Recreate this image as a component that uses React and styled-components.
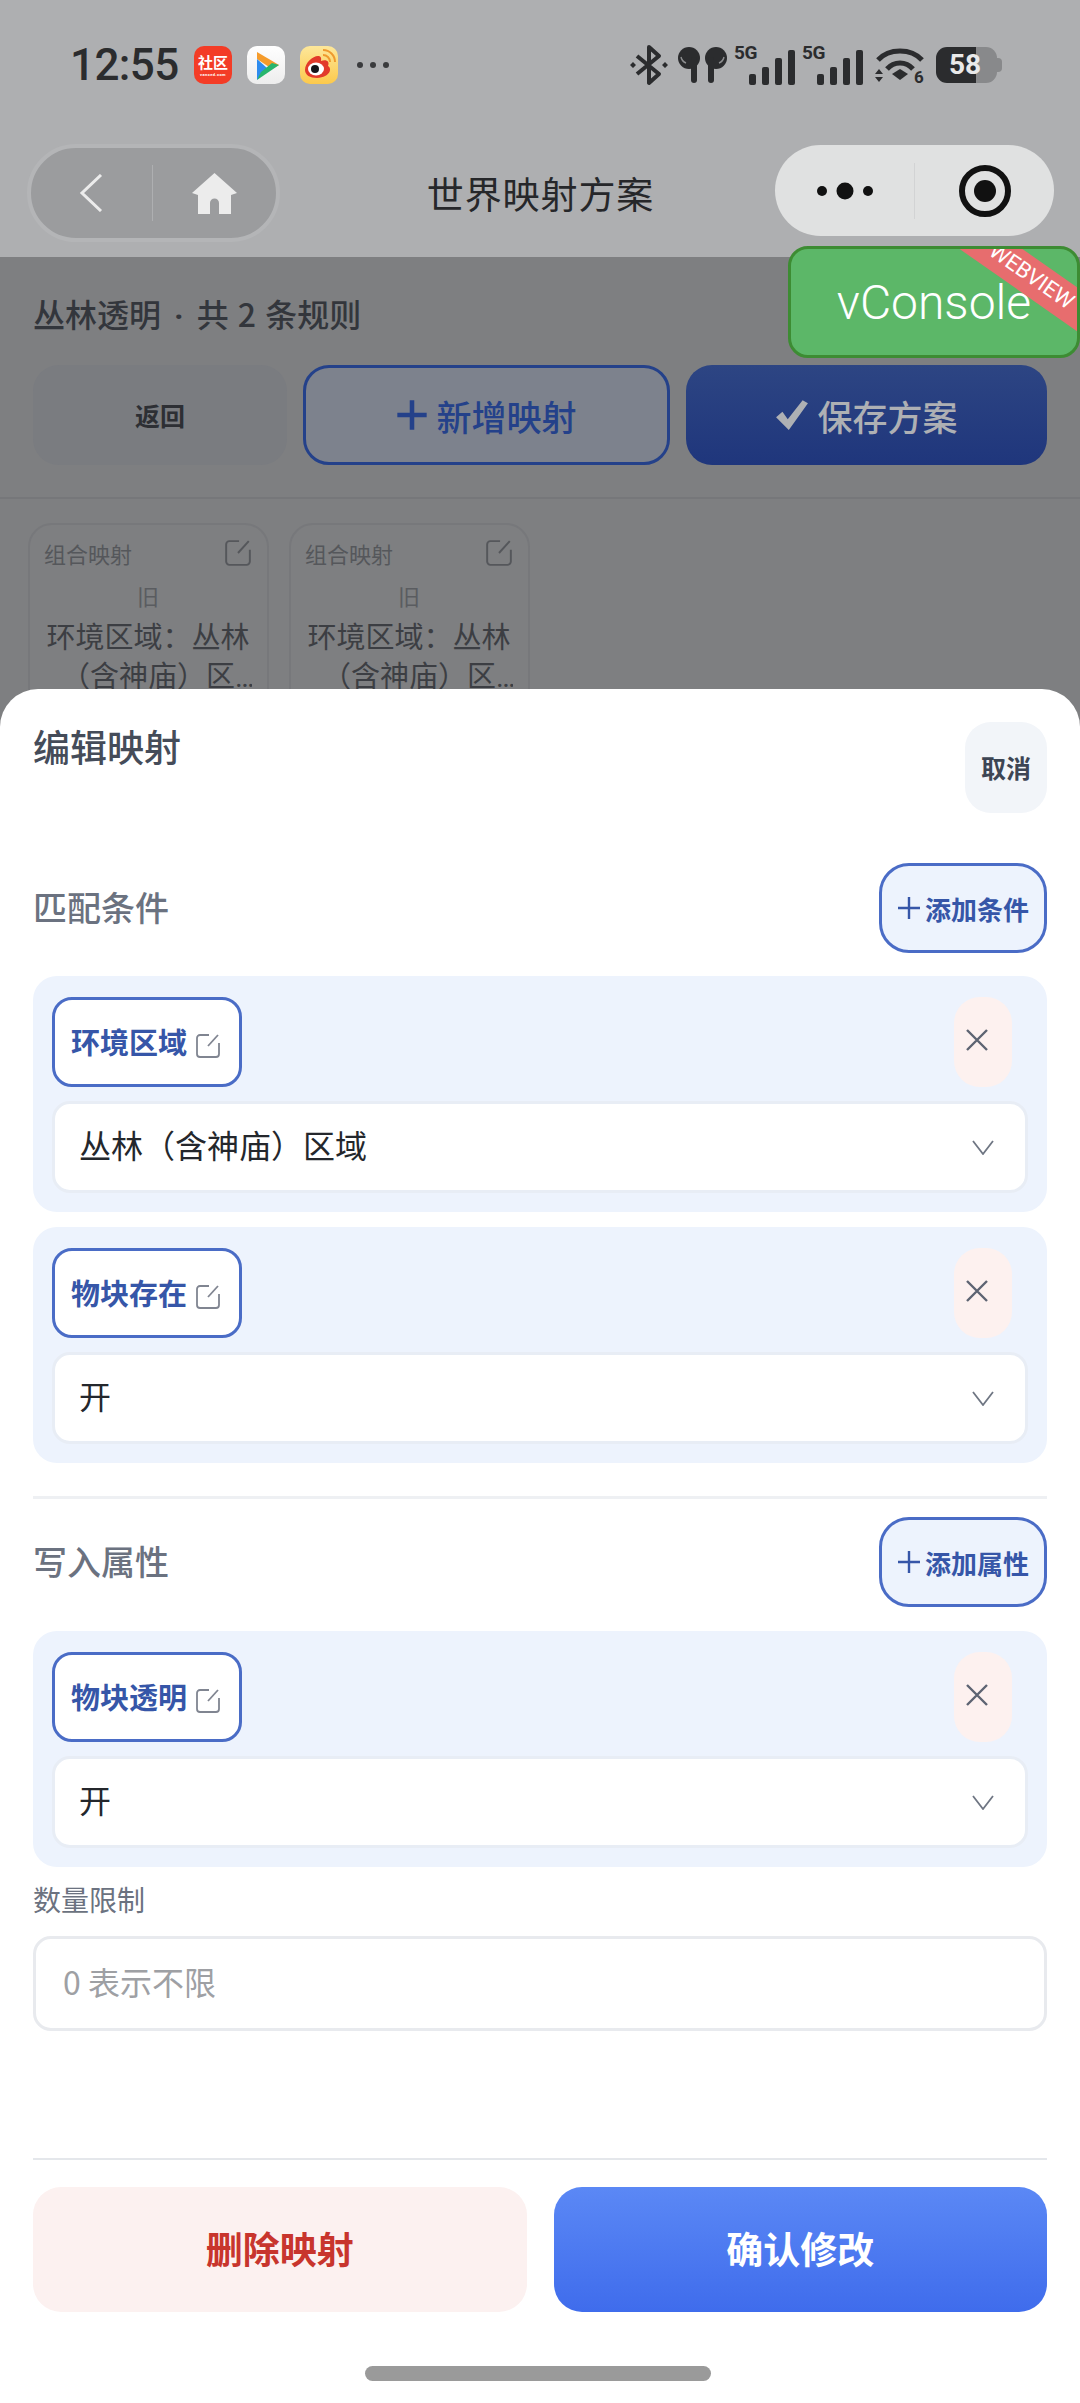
import React from 'react';
import styled, { createGlobalStyle } from 'styled-components';

const GlobalStyle = createGlobalStyle`
  html, body {
    margin: 0;
    padding: 0;
    background: #fff;
  }

  * {
    box-sizing: border-box;
  }
`;

const Page = styled.div`
  position: relative;
  width: 1080px;
  height: 2403px;
  overflow: hidden;
  background: #7e7f81;
  font-family: "Noto Sans CJK SC", "Noto Sans", sans-serif;
`;

const TopArea = styled.div`
  height: 257px;
  background: #aeafb1;
`;

const StatusBar = styled.div`
  display: flex;
  justify-content: space-between;
  align-items: center;
  height: 145px;
  padding: 43px 77px 58px 70px;
  color: #2b2c2e;
`;

const StatusGroup = styled.div`
  display: flex;
  align-items: center;
  gap: ${(props) => props.$gap || 0}px;
`;

const Time = styled.div`
  width: 124px;
  font-family: Roboto, sans-serif;
  font-size: 44px;
  font-weight: 500;
  letter-spacing: -0.6px;
  line-height: 44px;
`;

const AppIcon = styled.div`
  display: flex;
  flex-direction: column;
  align-items: center;
  justify-content: center;
  width: 38px;
  height: 38px;
  margin-right: 15px;
  border-radius: 10px;
  overflow: hidden;
  background: ${(props) => props.$bg};
  color: #fff;
  font-size: 15px;
  font-weight: 700;
  line-height: 17px;
`;

const AppTiny = styled.span`
  margin-top: 2px;
  font-family: Roboto, sans-serif;
  font-size: 4px;
  line-height: 5px;
  letter-spacing: 0.4px;
`;

const MoreDots = styled.div`
  display: flex;
  gap: 7px;
  margin-left: 4px;
`;

const Dot = styled.i`
  width: 6px;
  height: 6px;
  border-radius: 50%;
  background: #3a3b3d;
`;

const BluetoothIcon = styled.svg`
  margin-right: 3px;
`;

const WifiIcon = styled.svg`
  margin: 0 4px 0 5px;
`;

const Signal = styled.div`
  position: relative;
  display: flex;
  align-items: flex-end;
  justify-content: flex-end;
  gap: 6px;
  width: 61px;
  height: 40px;
`;

const SignalBadge = styled.span`
  position: absolute;
  top: -2px;
  left: 0;
  font-family: Roboto, sans-serif;
  font-size: 19px;
  font-weight: 700;
  line-height: 19px;
  letter-spacing: -0.5px;
`;

const SignalBar = styled.i`
  width: 7px;
  height: ${(props) => props.$h}px;
  border-radius: 2px;
  background: #2b2c2e;
`;

const Battery = styled.div`
  position: relative;
  display: flex;
  align-items: center;
  justify-content: center;
  width: 61px;
  height: 36px;
  margin-right: 6px;
  padding-right: 3px;
  border-radius: 11px;
  background: linear-gradient(90deg, #2b2c2e 0 40px, #88898b 40px);
  color: #e9e9e9;
  font-family: Roboto, sans-serif;
  font-size: 28px;
  font-weight: 700;
  line-height: 36px;

  &::after {
    content: "";
    position: absolute;
    top: 11px;
    right: -5px;
    width: 5px;
    height: 14px;
    border-radius: 0 4px 4px 0;
    background: #88898b;
  }
`;

const NavBar = styled.div`
  display: grid;
  grid-template-columns: 1fr auto 1fr;
  align-items: flex-start;
  height: 112px;
  padding: 0 26px 0 27px;
`;

const NavTitle = styled.div`
  padding-top: 21px;
  color: #26272a;
  font-size: 37px;
  line-height: 54px;
  letter-spacing: 0.9px;
`;

const BackCapsule = styled.div`
  display: flex;
  align-items: center;
  width: 253px;
  height: 98px;
  margin-top: -1px;
  border: 4px solid #b4b5b7;
  border-radius: 49px;
  background: #9b9c9e;
`;

const MenuCapsule = styled.div`
  display: flex;
  align-items: center;
  justify-self: end;
  width: 279px;
  height: 91px;
  border-radius: 46px;
  background: #e0e1e1;
`;

const CapsuleCell = styled.div`
  display: flex;
  align-items: center;
  justify-content: center;
  flex: ${(props) => props.$flex || 1};
`;

const CapsuleLine = styled.i`
  width: 1px;
  height: 56px;
  background: ${(props) => props.$color};
`;

const Behind = styled.div`
  height: 432px;
`;

const PlanTitle = styled.div`
  height: 78px;
  padding: 34px 33px 0;
  color: #33363c;
  font-size: 32px;
  font-weight: 500;
  line-height: 44px;
  word-spacing: 2px;
`;

const TitleDot = styled.span`
  margin: 0 13px;
  font-family: Roboto, sans-serif;
  font-weight: 700;
`;

const PlanActions = styled.div`
  display: flex;
  gap: 16px;
  height: 134px;
  margin-top: 30px;
  padding: 0 33px 32px;
  border-bottom: 2px solid #76777a;
`;

const PlanButton = styled.div`
  display: flex;
  align-items: center;
  justify-content: center;
  gap: 8px;
  flex: ${(props) => (props.$narrow ? '0 0 254px' : '1')};
  border-radius: 26px;
  border: ${(props) => (props.$variant === 'outline' ? '3px solid #24418a' : 'none')};
  background: ${(props) => {
    if (props.$variant === 'outline') return '#7d828d';
    if (props.$variant === 'solid') return 'linear-gradient(180deg, #2d4583, #1f367c)';
    return '#7a7c80';
  }};
  color: ${(props) => {
    if (props.$variant === 'outline') return '#24418a';
    if (props.$variant === 'solid') return '#aeb0b4';
    return '#2d2f34';
  }};
  font-size: ${(props) => (props.$narrow ? 25 : 35)}px;
  font-weight: ${(props) => (props.$narrow ? 700 : 500)};
`;

const CardRow = styled.div`
  display: flex;
  gap: 20px;
  padding: 24px 0 0 28px;
`;

const Card = styled.div`
  width: 241px;
  height: 240px;
  padding: 12px 15px 0 14px;
  border: 2px solid #77787b;
  border-radius: 24px;
`;

const CardHead = styled.div`
  display: flex;
  justify-content: space-between;
  align-items: center;
  color: #55575b;
  font-size: 22px;
  line-height: 32px;
`;

const CardOld = styled.div`
  margin-top: 11px;
  color: #5a5c60;
  font-size: 22px;
  line-height: 30px;
  text-align: center;
`;

const CardText = styled.div`
  display: -webkit-box;
  margin-top: 9px;
  overflow: hidden;
  color: #3c3e43;
  font-family: Roboto, "Noto Sans CJK SC", sans-serif;
  font-size: 29px;
  line-height: 39px;
  text-align: center;
  -webkit-box-orient: vertical;
  -webkit-line-clamp: 2;
`;

const VConsole = styled.div`
  position: absolute;
  top: 246px;
  left: 788px;
  display: flex;
  align-items: center;
  justify-content: center;
  width: 292px;
  height: 112px;
  overflow: hidden;
  border: 3px solid #3d8c33;
  border-radius: 20px;
  background: #5cb768;
  color: #fff;
  font-family: Roboto, sans-serif;
  font-size: 48px;
  font-weight: 300;
`;

const Ribbon = styled.div`
  position: absolute;
  top: 10px;
  right: -54px;
  width: 200px;
  height: 36px;
  background: #e76d6e;
  color: #fff;
  font-size: 22px;
  font-weight: 400;
  line-height: 34px;
  text-align: center;
  transform: rotate(35deg);
`;

const Sheet = styled.div`
  position: absolute;
  top: 689px;
  right: 0;
  bottom: 0;
  left: 0;
  display: flex;
  flex-direction: column;
  padding: 33px 33px 22px;
  border-radius: 38px 38px 0 0;
  background: #fff;
`;

const SheetHead = styled.div`
  display: flex;
  justify-content: space-between;
  align-items: flex-start;
`;

const SheetTitle = styled.div`
  color: #454c59;
  font-size: 37px;
  font-weight: 500;
  line-height: 48px;
`;

const CancelButton = styled.div`
  display: flex;
  align-items: center;
  justify-content: center;
  width: 82px;
  height: 91px;
  padding-bottom: 2px;
  border-radius: 26px;
  background: #f2f5f9;
  color: #3d4554;
  font-size: 25px;
  font-weight: 700;
`;

const SectionHead = styled.div`
  display: flex;
  justify-content: space-between;
  align-items: center;
  margin-top: ${(props) => props.$top}px;
`;

const SectionTitle = styled.div`
  padding-bottom: 4px;
  color: #6b7280;
  font-size: 34px;
  font-weight: 500;
`;

const AddButton = styled.div`
  display: flex;
  align-items: center;
  justify-content: center;
  gap: 4px;
  width: 168px;
  height: 90px;
  border: 3px solid #4a6cc6;
  border-radius: 30px;
  background: #edf3fd;
  color: #3656a8;
  font-size: 26px;
  font-weight: 700;
`;

const Group = styled.div`
  display: flex;
  flex-direction: column;
  gap: 14px;
  margin-top: ${(props) => props.$top}px;
  padding: 21px 19px 19px;
  border-radius: 24px;
  background: #edf3fd;
`;

const GroupHead = styled.div`
  display: flex;
  justify-content: space-between;
  align-items: flex-start;
`;

const Chip = styled.div`
  display: flex;
  align-items: center;
  gap: 8px;
  width: 190px;
  height: 90px;
  padding: 0 0 3px 16px;
  border: 3px solid #4a6cc6;
  border-radius: 20px;
  background: #fff;
  color: #3656a8;
  font-size: 29px;
  font-weight: 700;
`;

const ChipIcon = styled.svg`
  width: 26px;
  height: 26px;
  margin-top: 10px;
`;

const CloseButton = styled.div`
  display: flex;
  align-items: center;
  width: 58px;
  height: 90px;
  margin-right: 16px;
  padding: 0 0 5px 12px;
  border-radius: 26px;
  background: #fdf1ef;
`;

const Select = styled.div`
  display: flex;
  justify-content: space-between;
  align-items: center;
  height: 92px;
  padding: 0 31px 0 24px;
  border: 3px solid #e8edf5;
  border-radius: 18px;
  background: #fff;
  color: #24272c;
  font-size: 32px;
`;

const SelectText = styled.span`
  padding-bottom: 7px;
`;

const FieldLabel = styled.div`
  margin-top: 14px;
  color: #6b7280;
  font-size: 28px;
  line-height: 36px;
`;

const Input = styled.div`
  display: flex;
  align-items: center;
  height: 95px;
  margin-top: 19px;
  padding: 0 0 6px 27px;
  border: 3px solid #e8eaee;
  border-radius: 18px;
  color: #9ea0a4;
  font-size: 32px;
`;

const Divider = styled.div`
  flex: none;
  height: 3px;
  margin-top: 33px;
  background: #eef0f3;
`;

const Footer = styled.div`
  display: flex;
  gap: 27px;
  margin-top: auto;
  padding-top: 27px;
  border-top: 2px solid #e4e7eb;
`;

const FooterButton = styled.div`
  display: flex;
  align-items: center;
  justify-content: center;
  flex: 1;
  height: 125px;
  padding-bottom: 3px;
  border-radius: 28px;
  background: ${(props) => (props.$primary ? 'linear-gradient(180deg, #5b88f5, #3f6cec)' : '#fcf1f0')};
  color: ${(props) => (props.$primary ? '#fff' : '#c8352d')};
  font-size: 37px;
  font-weight: 700;
`;

const HomeBar = styled.div`
  align-self: center;
  width: 346px;
  height: 15px;
  margin: 54px 5px 0 0;
  border-radius: 8px;
  background: #9a9a9a;
`;

const EditIcon = ({ size = 28, color = '#55575b' }) => (
  <svg width={size} height={size} viewBox="0 0 26 26" fill="none" stroke={color} strokeWidth="1.8">
    <path d="M14 2H5a3 3 0 0 0-3 3v16a3 3 0 0 0 3 3h16a3 3 0 0 0 3-3V10" />
    <path d="M13 13 23 2" />
  </svg>
);

const PlusIcon = ({ size, color, stroke }) => (
  <svg width={size} height={size} viewBox="0 0 24 24" fill="none" stroke={color} strokeWidth={stroke}>
    <path d="M12 1v22M1 12h22" />
  </svg>
);

const ChevronIcon = () => (
  <svg width="22" height="15" viewBox="0 0 22 15" fill="none" stroke="#6f7683" strokeWidth="1.8">
    <path d="M1 1 11 14 21 1" />
  </svg>
);

const CloseIcon = () => (
  <svg width="22" height="22" viewBox="0 0 22 22" fill="none" stroke="#5d6472" strokeWidth="2.4">
    <path d="M1 1 21 21M21 1 1 21" />
  </svg>
);

const StatusIcons = () => (
  <StatusGroup $gap={7}>
    <BluetoothIcon width="38" height="42" viewBox="0 0 38 42" fill="none" stroke="#2b2c2e" strokeWidth="4">
      <path d="M7 12 29 30 19 39V3L29 12 7 30" strokeLinejoin="round" />
      <path d="M3 18 6 21 3 24 0 21ZM35 18 38 21 35 24 32 21Z" fill="#2b2c2e" stroke="none" />
    </BluetoothIcon>
    <svg width="49" height="36" viewBox="0 0 49 36" fill="#2b2c2e">
      <circle cx="11" cy="11" r="11" />
      <rect x="13" y="10" width="6" height="26" rx="3" />
      <circle cx="38" cy="11" r="11" />
      <rect x="30" y="10" width="6" height="26" rx="3" />
      <path d="M3 10a8 8 0 0 0 5 6M46 10a8 8 0 0 1-5 6" stroke="#8d8e90" strokeWidth="1.4" fill="none" />
    </svg>
    {[0, 1].map((item) => (
      <Signal key={item.toString()}>
        <SignalBadge>5G</SignalBadge>
        <SignalBar $h={11} />
        <SignalBar $h={18} />
        <SignalBar $h={27} />
        <SignalBar $h={35} />
      </Signal>
    ))}
    <WifiIcon width="50" height="37" viewBox="0 0 50 37" fill="none" stroke="#2b2c2e" strokeWidth="5">
      <path d="M3 13C14 1 36 1 47 13" />
      <path d="M12 22C19 14 31 14 38 22" />
      <path d="M17 27 25 22 33 27 25 33Z" fill="#2b2c2e" stroke="none" />
      <path d="M0 27 4 22 8 27ZM0 30 4 35 8 30Z" fill="#2b2c2e" stroke="none" />
      <text x="39" y="36" fill="#2b2c2e" stroke="none" fontSize="17" fontWeight="700" fontFamily="Roboto, sans-serif">6</text>
    </WifiIcon>
    <Battery>58</Battery>
  </StatusGroup>
);

const AppIcons = () => (
  <>
    <AppIcon $bg="#f33c26">
      社区
      <AppTiny>vanced.com</AppTiny>
    </AppIcon>
    <AppIcon $bg="linear-gradient(180deg, #fff, #ededed)">
      <svg width="30" height="34" viewBox="0 0 30 34" fill="none">
        <path d="M6 4 28 17 21 21 6 11Z" fill="#f59c2c" />
        <path d="M6 11 6 32 16 20Z" fill="#2f8cee" />
        <path d="M6 32 28 17 21 15 10 24Z" fill="#27b56d" />
      </svg>
    </AppIcon>
    <AppIcon $bg="linear-gradient(180deg, #fde79a, #fcc94c)">
      <svg width="34" height="32" viewBox="0 0 34 32" fill="none">
        <path d="M3 21C3 13 12 6 17 7 20 8 19 11 19 12 24 10 28 12 26 17 30 19 29 28 15 29 8 29 3 26 3 21Z" fill="#e23a2b" />
        <ellipse cx="14" cy="20" rx="8" ry="6.5" fill="#fff" />
        <circle cx="13" cy="20" r="4" fill="#15151a" />
        <path d="M21 6a7 7 0 0 1 7 7M21 1a12 12 0 0 1 12 12" stroke="#ef9a2e" strokeWidth="2" />
      </svg>
    </AppIcon>
    <MoreDots>
      <Dot />
      <Dot />
      <Dot />
    </MoreDots>
  </>
);

const RuleCard = () => (
  <Card>
    <CardHead>
      组合映射
      <EditIcon />
    </CardHead>
    <CardOld>旧</CardOld>
    <CardText>环境区域：丛林（含神庙）区域，物块存在：开</CardText>
  </Card>
);

const RuleGroup = ({ name, value, top }) => (
  <Group $top={top}>
    <GroupHead>
      <Chip>
        {name}
        <ChipIcon viewBox="0 0 26 26" fill="none" stroke="#808591" strokeWidth="1.8">
          <path d="M14 2H5a3 3 0 0 0-3 3v16a3 3 0 0 0 3 3h16a3 3 0 0 0 3-3V10" />
          <path d="M13 13 23 2" />
        </ChipIcon>
      </Chip>
      <CloseButton>
        <CloseIcon />
      </CloseButton>
    </GroupHead>
    <Select>
      <SelectText>{value}</SelectText>
      <ChevronIcon />
    </Select>
  </Group>
);

const App = () => (
  <Page>
    <GlobalStyle />
    <TopArea>
      <StatusBar>
        <StatusGroup>
          <Time>12:55</Time>
          <AppIcons />
        </StatusGroup>
        <StatusIcons />
      </StatusBar>
      <NavBar>
        <BackCapsule>
          <CapsuleCell>
            <svg width="24" height="38" viewBox="0 0 24 38" fill="none" stroke="#ececec" strokeWidth="3">
              <path d="M22 1 3 19 22 37" />
            </svg>
          </CapsuleCell>
          <CapsuleLine $color="#aeafb1" />
          <CapsuleCell $flex={1.02}>
            <svg width="45" height="41" viewBox="0 0 45 41" fill="#ececec">
              <path d="M22.5 0 45 20 39 22V41H27V30a4.5 4.5 0 0 0-9 0V41H6V22L0 20Z" />
            </svg>
          </CapsuleCell>
        </BackCapsule>
        <NavTitle>世界映射方案</NavTitle>
        <MenuCapsule>
          <CapsuleCell>
            <svg width="56" height="18" viewBox="0 0 56 18" fill="#111">
              <circle cx="5" cy="9" r="5" />
              <circle cx="28" cy="9" r="8.5" />
              <circle cx="51" cy="9" r="5" />
            </svg>
          </CapsuleCell>
          <CapsuleLine $color="#d2d3d4" />
          <CapsuleCell>
            <svg width="52" height="52" viewBox="0 0 52 52" fill="none" stroke="#111" strokeWidth="6">
              <circle cx="26" cy="26" r="23" />
              <circle cx="26" cy="26" r="11" fill="#111" stroke="none" />
            </svg>
          </CapsuleCell>
        </MenuCapsule>
      </NavBar>
    </TopArea>
    <Behind>
      <PlanTitle>
        丛林透明
        <TitleDot>·</TitleDot>
        共 2 条规则
      </PlanTitle>
      <PlanActions>
        <PlanButton $narrow>返回</PlanButton>
        <PlanButton $variant="outline">
          <PlusIcon size={32} color="#24418a" stroke={3.4} />
          新增映射
        </PlanButton>
        <PlanButton $variant="solid">
          <svg width="34" height="32" viewBox="0 0 32 30" fill="#aeb0b4">
            <path d="M1 17 7 12 12 19 26 1 31 4 13 29Z" />
          </svg>
          保存方案
        </PlanButton>
      </PlanActions>
      <CardRow>
        <RuleCard />
        <RuleCard />
      </CardRow>
    </Behind>
    <VConsole>
      vConsole
      <Ribbon>WEBVIEW</Ribbon>
    </VConsole>
    <Sheet>
      <SheetHead>
        <SheetTitle>编辑映射</SheetTitle>
        <CancelButton>取消</CancelButton>
      </SheetHead>
      <SectionHead $top={50}>
        <SectionTitle>匹配条件</SectionTitle>
        <AddButton>
          <PlusIcon size={24} color="#3656a8" stroke={2.4} />
          添加条件
        </AddButton>
      </SectionHead>
      <RuleGroup top={23} name="环境区域" value="丛林（含神庙）区域" />
      <RuleGroup top={15} name="物块存在" value="开" />
      <Divider />
      <SectionHead $top={18}>
        <SectionTitle>写入属性</SectionTitle>
        <AddButton>
          <PlusIcon size={24} color="#3656a8" stroke={2.4} />
          添加属性
        </AddButton>
      </SectionHead>
      <RuleGroup top={24} name="物块透明" value="开" />
      <FieldLabel>数量限制</FieldLabel>
      <Input>0 表示不限</Input>
      <Footer>
        <FooterButton>删除映射</FooterButton>
        <FooterButton $primary>确认修改</FooterButton>
      </Footer>
      <HomeBar />
    </Sheet>
  </Page>
);

export default App;
